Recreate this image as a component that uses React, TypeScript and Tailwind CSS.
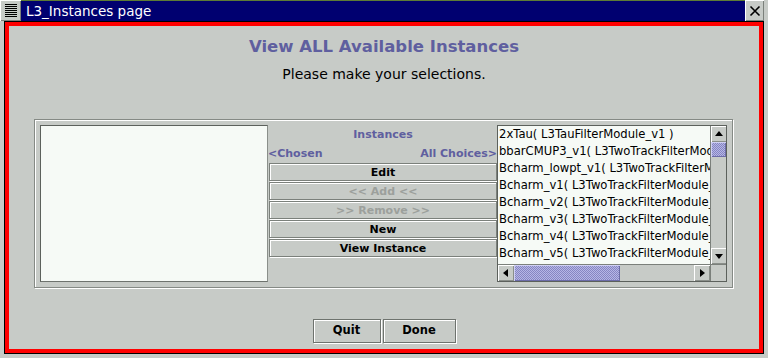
import React from "react";

const items = [
  "2xTau( L3TauFilterModule_v1 )",
  "bbarCMUP3_v1( L3TwoTrackFilterModule_v1 )",
  "Bcharm_lowpt_v1( L3TwoTrackFilterModule_v1 )",
  "Bcharm_v1( L3TwoTrackFilterModule_v1 )",
  "Bcharm_v2( L3TwoTrackFilterModule_v1 )",
  "Bcharm_v3( L3TwoTrackFilterModule_v1 )",
  "Bcharm_v4( L3TwoTrackFilterModule_v1 )",
  "Bcharm_v5( L3TwoTrackFilterModule_v1 )",
  "Bcharm_v6( L3TwoTrackFilterModule_v1 )",
];

function MidButton({ label, disabled }: { label: string; disabled?: boolean }) {
  return (
    <div
      className={`h-[18px] mb-[1px] border border-[#7b807b] shadow-[inset_1px_1px_0_#ffffff,1px_1px_0_#ffffff] flex items-center justify-center text-[11px] font-bold leading-none ${
        disabled ? "text-[#9ca09c]" : "text-black"
      }`}
    >
      {label}
    </div>
  );
}

function Arrow({ dir }: { dir: "up" | "down" | "left" | "right" }) {
  const pts =
    dir === "up"
      ? "4,10 12,10 8,5"
      : dir === "down"
      ? "4,6 12,6 8,11"
      : dir === "left"
      ? "10,4 10,12 5,8"
      : "6,4 6,12 11,8";
  return (
    <div className="w-[16px] h-[16px] shrink-0 bg-[#c7cbc7] shadow-[inset_1px_1px_0_#ffffff,inset_-1px_-1px_0_#8a8f8a]">
      <svg width="16" height="16" viewBox="0 0 16 16">
        <polygon points={pts} fill="#000" />
      </svg>
    </div>
  );
}

const thumb =
  "bg-[#a4a4d6] bg-[image:repeating-conic-gradient(#8686c2_0_25%,#b6b6e6_0_50%)] bg-[length:2px_2px] shadow-[inset_1px_1px_0_#d0d0f4,inset_-1px_-1px_0_#6c6ca8]";

export default function App() {
  return (
    <div className="w-[768px] h-[358px] bg-[#c7cbc7] flex flex-col overflow-hidden font-['DejaVu_Sans',Verdana,sans-serif]">
      {/* title bar */}
      <div className="h-[21px] flex shrink-0">
        <div className="w-[21px] h-[21px] bg-[#c7cbc7] shadow-[inset_1px_1px_0_#ffffff,inset_-1px_-1px_0_#7b807b]">
          <svg width="21" height="21" viewBox="0 0 21 21">
            {[4, 6, 8, 10, 12, 14, 16].map((y) => (
              <rect key={y} x="5" y={y} width="12" height="1" fill="#000" />
            ))}
          </svg>
        </div>
        <div className="flex-1 bg-[#000070] border-t border-[#5d7b35] text-white text-[13.5px] leading-[20px] pl-[5px] whitespace-nowrap">
          L3_Instances page
        </div>
        <div className="w-[19px] h-[21px] bg-[#c7cbc7] shadow-[inset_1px_1px_0_#ffffff,inset_-1px_-1px_0_#7b807b] flex items-center justify-center">
          <svg width="12" height="12" viewBox="0 0 12 12">
            <path d="M1.5 1.5 L10.5 10.5 M10.5 1.5 L1.5 10.5" stroke="#000" strokeWidth="1.6" />
          </svg>
        </div>
        <div className="w-[4px] bg-[#c7cbc7]" />
      </div>

      {/* frame */}
      <div className="flex-1 flex px-[4px] pb-[4px] min-h-0">
        <div className="flex-1 flex border border-black min-h-0">
          <div className="flex-1 flex flex-col border-4 border-[#ff0000] bg-[#c7cbc7] min-h-0">
            <div className="mt-[11px] h-[20px] leading-[20px] text-center text-[16.5px] font-bold text-[#5f5f9f]">
              View ALL Available Instances
            </div>
            <div className="mt-[8px] h-[18px] leading-[18px] text-center text-[14px] text-black">
              Please make your selections.
            </div>

            {/* main panel */}
            <div className="mt-[36px] ml-[25px] w-[699px] border border-[#858a85] shadow-[inset_1px_1px_0_#ffffff,1px_1px_0_#ffffff] p-[5px]">
              <div className="h-[157px] grid grid-cols-[228px_229px_230px] grid-rows-[157px]">
                {/* left list */}
                <div className="bg-[#f6faf6] border border-t-[#5c615c] border-l-[#5c615c] border-r-[#8a8f8a] border-b-[#6e736e]" />

                {/* middle */}
                <div className="flex flex-col pl-[1px]">
                  <div className="h-[19px] leading-[19px] text-center text-[11px] font-bold text-[#5f5f9f]">Instances</div>
                  <div className="h-[19px] leading-[19px] flex justify-between text-[11px] font-bold text-[#5f5f9f] -ml-[1px]">
                    <span>&lt;Chosen</span>
                    <span>All Choices&gt;</span>
                  </div>
                  <MidButton label="Edit" />
                  <MidButton label="<< Add <<" disabled />
                  <MidButton label=">> Remove >>" disabled />
                  <MidButton label="New" />
                  <MidButton label="View Instance" />
                </div>

                {/* right list */}
                <div className="border border-[#5c615c] flex flex-col bg-[#c7cbc7] min-h-0 overflow-hidden">
                  <div className="flex flex-1 min-h-0">
                    <div className="flex-1 bg-[#f6faf6] overflow-hidden">
                      {items.map((t) => (
                        <div key={t} className="h-[17px] leading-[17px] pl-[1px] text-[11.6px] text-black whitespace-nowrap">
                          {t}
                        </div>
                      ))}
                    </div>
                    <div className="w-[16px] flex flex-col border-l border-[#7b807b] bg-[#c7cbc7]">
                      <Arrow dir="up" />
                      <div className={`h-[15px] ${thumb}`} />
                      <div className="flex-1" />
                      <Arrow dir="down" />
                    </div>
                  </div>
                  <div className="h-[17px] shrink-0 flex border-t border-[#7b807b]">
                    <Arrow dir="left" />
                    <div className={`w-[106px] ${thumb}`} />
                    <div className="flex-1" />
                    <Arrow dir="right" />
                    <div className="w-[16px] border-l border-[#7b807b]" />
                  </div>
                </div>
              </div>
            </div>

            {/* bottom buttons */}
            <div className="mt-[31px] flex justify-center gap-[2px]">
              <div className="w-[68px] h-[24px] border border-[#6e736e] shadow-[inset_1px_1px_0_#ffffff,1px_1px_0_#ffffff] flex items-center justify-center text-[11.5px] font-bold text-black">
                Quit
              </div>
              <div className="w-[73px] h-[24px] border border-[#6e736e] shadow-[inset_1px_1px_0_#ffffff,1px_1px_0_#ffffff] flex items-center justify-center text-[11.5px] font-bold text-black">
                Done
              </div>
            </div>
          </div>
        </div>
      </div>
    </div>
  );
}
